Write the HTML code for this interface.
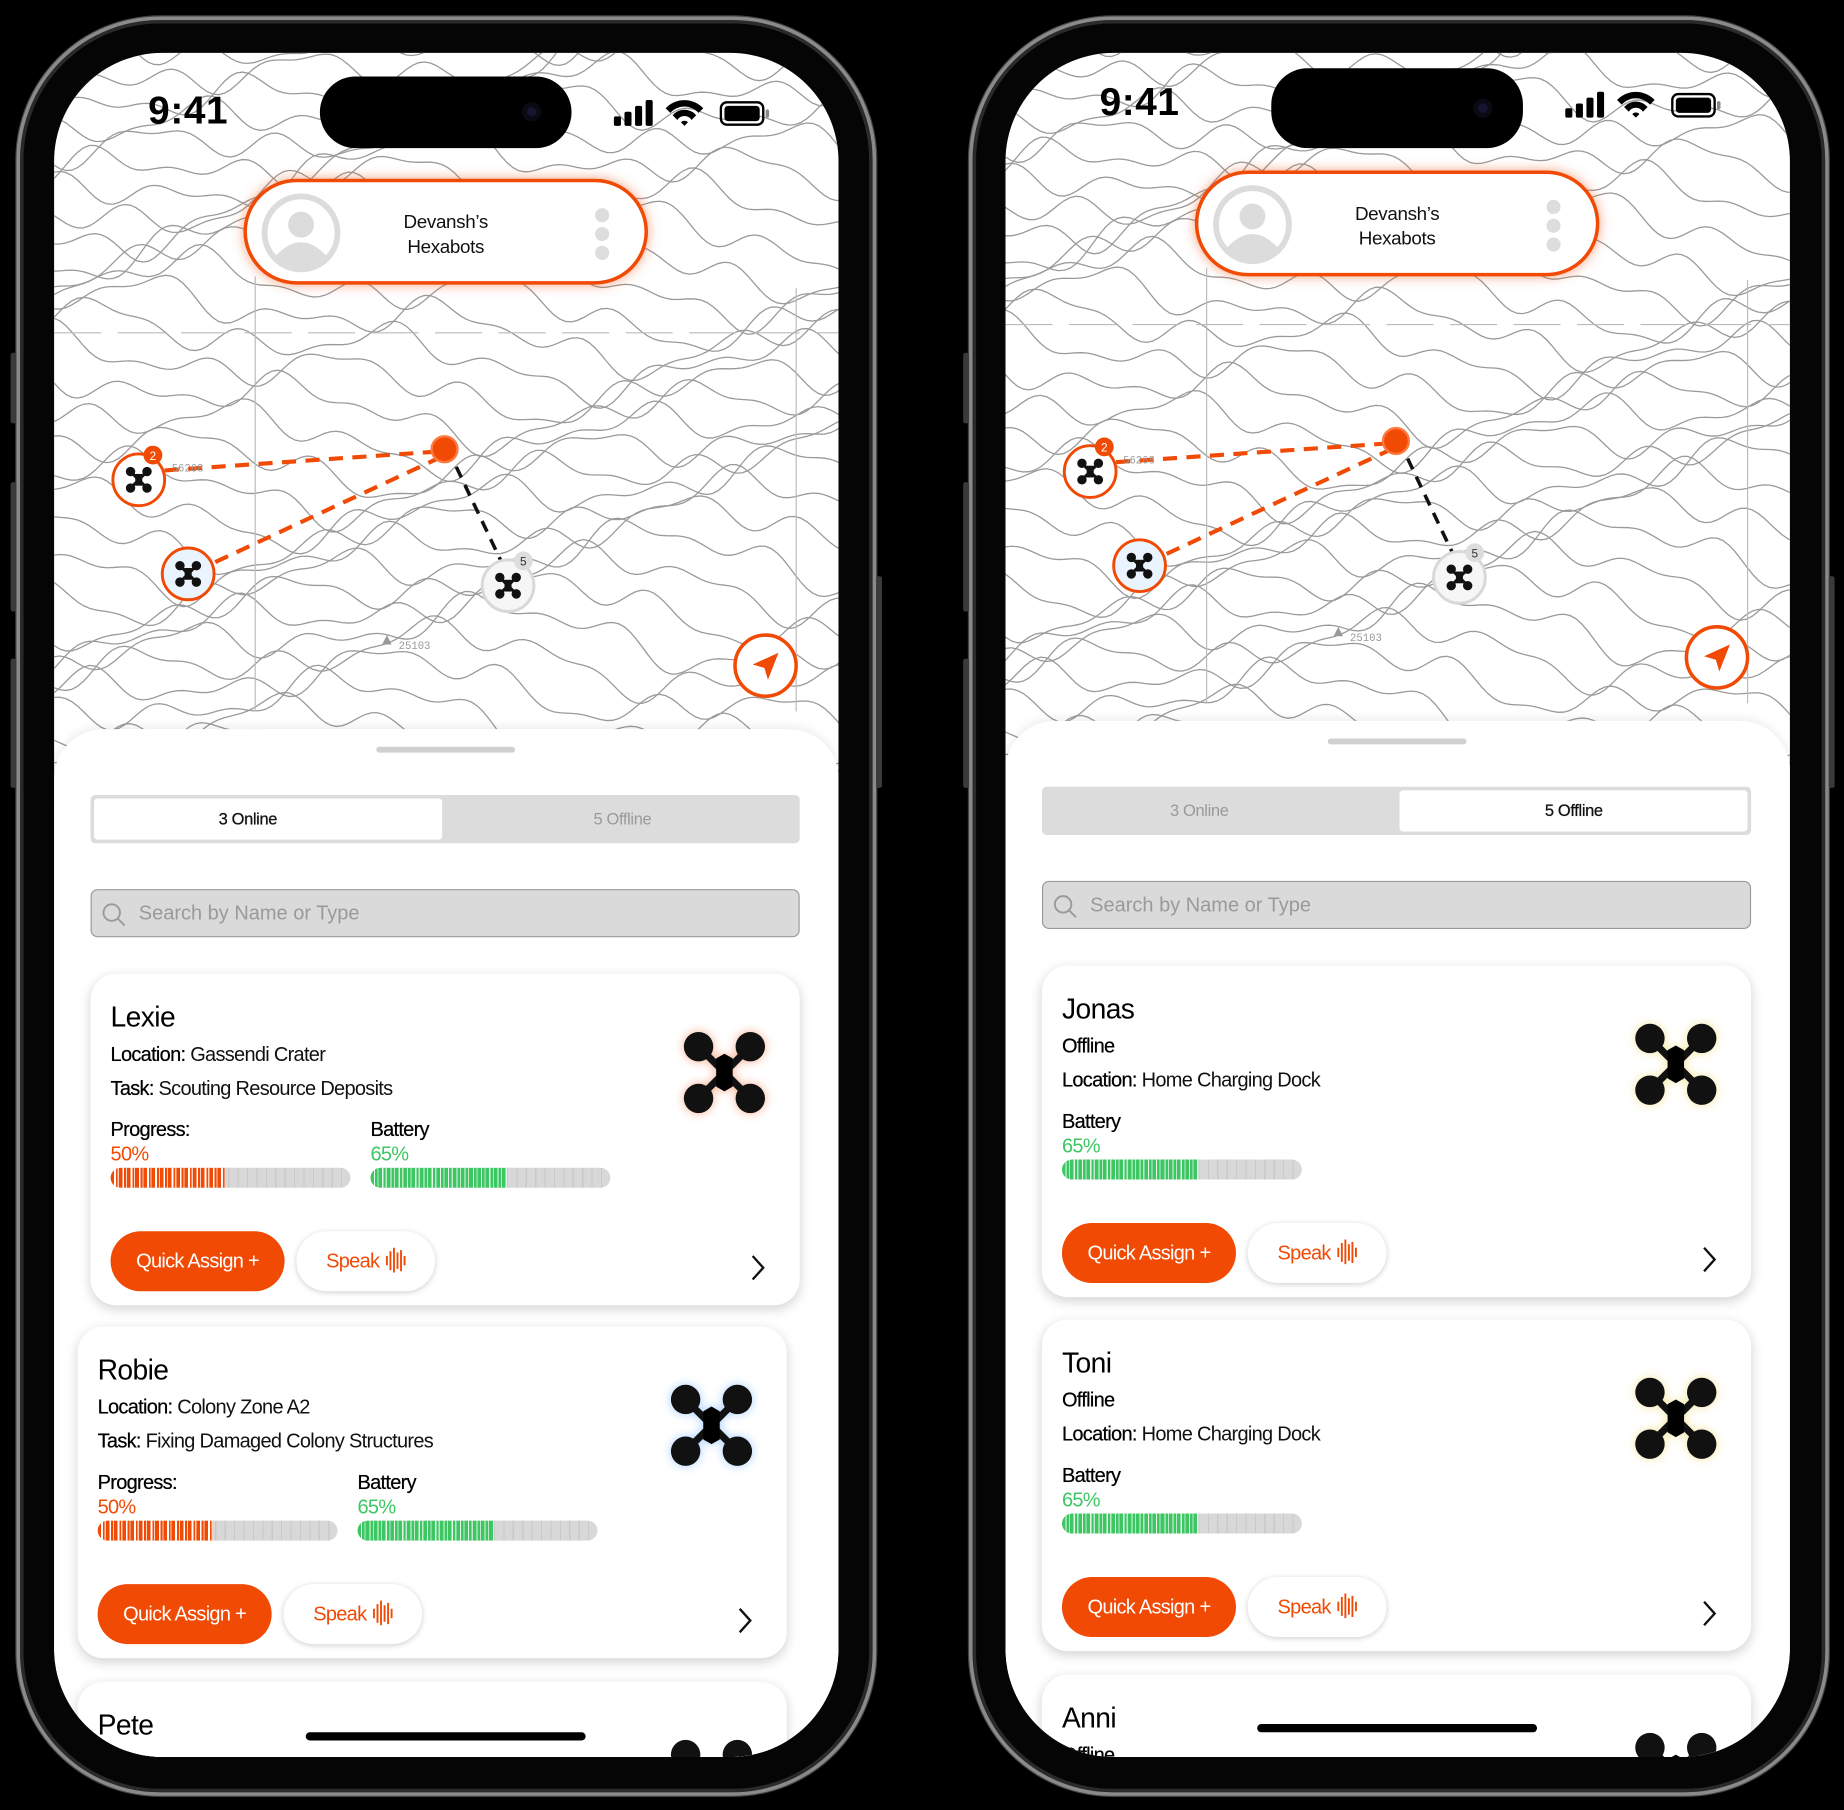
<!DOCTYPE html>
<html><head><meta charset="utf-8">
<style>
*{margin:0;padding:0;box-sizing:border-box}
html,body{width:1844px;height:1810px;background:#000;overflow:hidden;font-family:"Liberation Sans",sans-serif}
#root{position:absolute;left:0;top:0;width:1568px;height:1539px;transform:scale(1.17602);transform-origin:0 0;overflow:hidden}
.frame{position:absolute;top:14px;width:731px;height:1513px;border-radius:122px;background:#050505;border:3px solid #8a8a8a;box-shadow:inset 0 0 0 3px #2a2a2a, 0 0 0 1px #444}
.btn-side{position:absolute;width:5px;background:#3a3a3a;border-radius:2px}
.screen{position:absolute;top:45px;width:667px;height:1449px;border-radius:92px;overflow:hidden;background:#fff}
.inner{position:absolute;left:0;top:0;width:667px;height:1456px;overflow:hidden}
.ab{position:absolute}
.time{left:80px;top:30px;font-size:33px;font-weight:bold;letter-spacing:.5px;color:#000}
.island{left:226px;top:20px;width:214px;height:61px;background:#000;border-radius:31px}
.pill{left:161px;top:107px;width:344px;height:90px;border:3px solid #f04a05;border-radius:46px;background:#fff;box-shadow:0 0 10px rgba(240,74,5,.5)}
.pilltxt{left:0;width:100%;top:24px;text-align:center;font-size:16px;line-height:21px;color:#111;letter-spacing:-.3px}
.sheet{left:0;top:575px;width:667px;height:880px;background:#fff;border-radius:42px 42px 0 0;box-shadow:0 -2px 8px rgba(0,0,0,.08)}
.handle{left:274px;top:15px;width:118px;height:5px;border-radius:3px;background:#d0d0d0}
.seg{left:31px;top:56px;width:603px;height:41px;background:#dcdcdc;border-radius:4px}
.segsel{top:3px;width:296px;height:35px;background:#fff;border-radius:3px}
.segt{top:0;width:50%;line-height:41px;text-align:center;font-size:14px;letter-spacing:-.3px}
.search{left:31px;top:136px;width:603px;height:41px;background:#dadada;border:1.5px solid #9a9a9a;border-radius:6px}
.search span{position:absolute;left:40px;top:0;line-height:39px;font-size:17px;color:#9a9a9a}
.card{position:absolute;width:603px;height:282px;background:#fff;border-radius:22px;box-shadow:0 3px 10px rgba(0,0,0,.18)}
.card .t{position:absolute;left:17px;font-size:17px;line-height:20px;color:#111;letter-spacing:-.6px;white-space:nowrap}
.card .t b{font-weight:normal;color:#000;text-shadow:0 0 .4px #000}
.card .name{position:absolute;left:17px;top:24px;font-size:24px;line-height:28px;color:#000;letter-spacing:-.5px}
.bar{position:absolute;top:165px;width:204px;height:17px;border-radius:9px;overflow:hidden;background:repeating-linear-gradient(90deg,#d8d8d8 0 4px,#c9c9c9 4px 5px,#d8d8d8 5px 8px)}
.bar i{position:absolute;left:0;top:0;height:100%;border-radius:9px 0 0 9px}
.fo{background:repeating-linear-gradient(90deg,#f04a05 0 3px,#fff 3px 4.5px,#f04a05 4.5px 6px,#fbd0bd 6px 7px)}
.fg{background:repeating-linear-gradient(90deg,#3cc763 0 3px,#e6f7ea 3px 4px,#3cc763 4px 6px,#bde9c8 6px 7px)}
.qa{position:absolute;left:17px;top:219px;width:148px;height:51px;border-radius:26px;background:#f04a05;color:#fff;font-size:17px;line-height:51px;text-align:center;letter-spacing:-.6px}
.sp{position:absolute;left:175px;top:219px;width:118px;height:51px;border-radius:26px;background:#fff;box-shadow:0 1px 5px rgba(0,0,0,.2);color:#f04a05;font-size:17px;line-height:51px;text-align:center;letter-spacing:-.6px}
.chev{position:absolute;left:560px;top:238px}
.drone{position:absolute;left:503px;top:48px}
.card .t.orn{color:#f04a05}.card .t.grn{color:#3cc763}
</style></head><body>
<div id="root">

<!-- LEFT PHONE -->
<div class="frame" style="left:14px"></div>
<div class="btn-side" style="left:9px;top:300px;height:60px"></div>
<div class="btn-side" style="left:9px;top:410px;height:110px"></div>
<div class="btn-side" style="left:9px;top:560px;height:110px"></div>
<div class="btn-side" style="left:745px;top:490px;height:180px"></div>
<div class="screen" style="left:46px">
 <div class="inner" id="L">
  <svg class="ab map" style="left:0;top:0" width="667" height="640"></svg>
  <div class="ab time">9:41</div>
  <div class="ab island"><div class="ab" style="left:172px;top:22px;width:16px;height:16px;border-radius:50%;background:#151530;box-shadow:inset 0 0 0 4px #0a0a14"></div></div>
  <svg class="ab" style="left:474px;top:38px" width="140" height="26"><rect x="2" y="16" width="6" height="8" rx="1.5"/><rect x="11" y="12" width="6" height="12" rx="1.5"/><rect x="20" y="7" width="6" height="17" rx="1.5"/><rect x="29" y="2" width="6" height="22" rx="1.5"/><path d="M46 9 A22 22 0 0 1 78 9 L74 13 A16 16 0 0 0 50 13Z M52 15 A13 13 0 0 1 72 15 L68 19 A7 7 0 0 0 56 19Z M59 21 L62 24 L65 21 A4 4 0 0 0 59 21Z"/><rect x="93" y="4" width="36" height="19" rx="5" fill="none" stroke="#000" stroke-width="2"/><rect x="96" y="7" width="30" height="13" rx="3"/><rect x="131" y="10" width="3" height="7" rx="1.5" fill="#888"/></svg>
  <div class="ab pill"><svg class="ab" style="left:12px;top:9px" width="68" height="68"><circle cx="34" cy="34" r="31" fill="#fff" stroke="#dcdcdc" stroke-width="5"/><circle cx="34" cy="27" r="11" fill="#dcdcdc"/><path d="M12 54 Q34 30 56 54 A31 31 0 0 1 12 54Z" fill="#dcdcdc"/></svg><div class="ab pilltxt">Devansh’s<br>Hexabots</div><svg class="ab" style="left:295px;top:20px" width="14" height="50"><circle cx="7" cy="8" r="6" fill="#ddd"/><circle cx="7" cy="24" r="6" fill="#ddd"/><circle cx="7" cy="40" r="6" fill="#ddd"/></svg></div>
  <svg class="ab marks" style="left:0;top:0" width="667" height="575"></svg>
  <div class="ab sheet">
   <div class="ab handle"></div>
   <div class="ab seg"><div class="ab segsel" style="left:3px"></div><div class="ab segt" style="left:-17px;color:#111;text-shadow:0 0 .5px #111">3 Online</div><div class="ab segt" style="left:50%;color:#9a9a9a">5 Offline</div></div>
   <div class="ab search"><svg class="ab" style="left:8px;top:10px" width="22" height="22"><circle cx="9" cy="9" r="7" fill="none" stroke="#9a9a9a" stroke-width="1.6"/><path d="M14 14 L20 20" stroke="#9a9a9a" stroke-width="1.6"/></svg><span>Search by Name or Type</span></div>
  </div>
  <div class="card" style="left:31px;top:783px">
   <div class="name">Lexie</div>
   <div class="t" style="top:59px"><b>Location:</b> Gassendi Crater</div>
   <div class="t" style="top:88px"><b>Task:</b> Scouting Resource Deposits</div>
   <div class="t" style="top:123px"><b>Progress:</b></div><div class="t orn" style="top:144px">50%</div>
   <div class="t" style="top:123px;left:238px"><b>Battery</b></div><div class="t grn" style="top:144px;left:238px">65%</div>
   <div class="bar" style="left:17px"><i class="fo" style="width:48%"></i></div>
   <div class="bar" style="left:238px"><i class="fg" style="width:57%"></i></div>
   <svg class="drone" width="72" height="72" style="filter:drop-shadow(0 0 4px rgba(240,74,5,.45))"><use href="#dr"/></svg>
   <div class="qa">Quick Assign +</div><div class="sp">Speak <svg width="18" height="22" style="vertical-align:-4px"><use href="#wv"/></svg></div>
   <svg class="chev" width="16" height="24"><path d="M3 2 L12 12 L3 22" fill="none" stroke="#111" stroke-width="2"/></svg>
  </div>
  <div class="card" style="left:20px;top:1083px">
   <div class="name">Robie</div>
   <div class="t" style="top:59px"><b>Location:</b> Colony Zone A2</div>
   <div class="t" style="top:88px"><b>Task:</b> Fixing Damaged Colony Structures</div>
   <div class="t" style="top:123px"><b>Progress:</b></div><div class="t orn" style="top:144px">50%</div>
   <div class="t" style="top:123px;left:238px"><b>Battery</b></div><div class="t grn" style="top:144px;left:238px">65%</div>
   <div class="bar" style="left:17px"><i class="fo" style="width:48%"></i></div>
   <div class="bar" style="left:238px"><i class="fg" style="width:57%"></i></div>
   <svg class="drone" width="72" height="72" style="filter:drop-shadow(0 0 4px rgba(80,160,255,.5))"><use href="#dr"/></svg>
   <div class="qa">Quick Assign +</div><div class="sp">Speak <svg width="18" height="22" style="vertical-align:-4px"><use href="#wv"/></svg></div>
   <svg class="chev" width="16" height="24"><path d="M3 2 L12 12 L3 22" fill="none" stroke="#111" stroke-width="2"/></svg>
  </div>
  <div class="card" style="left:20px;top:1385px;height:100px">
   <div class="name">Pete</div>
   <svg class="drone" width="72" height="72"><use href="#dr"/></svg>
  </div>
  <div class="ab" style="left:214px;top:1428px;width:238px;height:7px;border-radius:4px;background:#000"></div>
 </div>
</div>

<!-- RIGHT PHONE -->
<div class="frame" style="left:824px"></div>
<div class="btn-side" style="left:819px;top:300px;height:60px"></div>
<div class="btn-side" style="left:819px;top:410px;height:110px"></div>
<div class="btn-side" style="left:819px;top:560px;height:110px"></div>
<div class="btn-side" style="left:1555px;top:490px;height:180px"></div>
<div class="screen" style="left:855px">
 <div class="inner" id="R" style="top:-7px">
  <svg class="ab map" style="left:0;top:0" width="667" height="640"></svg>
  <div class="ab time">9:41</div>
  <div class="ab island" style="top:20px;height:68px"><div class="ab" style="left:172px;top:26px;width:16px;height:16px;border-radius:50%;background:#151530;box-shadow:inset 0 0 0 4px #0a0a14"></div></div>
  <svg class="ab" style="left:474px;top:38px" width="140" height="26"><rect x="2" y="16" width="6" height="8" rx="1.5"/><rect x="11" y="12" width="6" height="12" rx="1.5"/><rect x="20" y="7" width="6" height="17" rx="1.5"/><rect x="29" y="2" width="6" height="22" rx="1.5"/><path d="M46 9 A22 22 0 0 1 78 9 L74 13 A16 16 0 0 0 50 13Z M52 15 A13 13 0 0 1 72 15 L68 19 A7 7 0 0 0 56 19Z M59 21 L62 24 L65 21 A4 4 0 0 0 59 21Z"/><rect x="93" y="4" width="36" height="19" rx="5" fill="none" stroke="#000" stroke-width="2"/><rect x="96" y="7" width="30" height="13" rx="3"/><rect x="131" y="10" width="3" height="7" rx="1.5" fill="#888"/></svg>
  <div class="ab pill"><svg class="ab" style="left:12px;top:9px" width="68" height="68"><circle cx="34" cy="34" r="31" fill="#fff" stroke="#dcdcdc" stroke-width="5"/><circle cx="34" cy="27" r="11" fill="#dcdcdc"/><path d="M12 54 Q34 30 56 54 A31 31 0 0 1 12 54Z" fill="#dcdcdc"/></svg><div class="ab pilltxt">Devansh’s<br>Hexabots</div><svg class="ab" style="left:295px;top:20px" width="14" height="50"><circle cx="7" cy="8" r="6" fill="#ddd"/><circle cx="7" cy="24" r="6" fill="#ddd"/><circle cx="7" cy="40" r="6" fill="#ddd"/></svg></div>
  <svg class="ab marks" style="left:0;top:0" width="667" height="575"></svg>
  <div class="ab sheet">
   <div class="ab handle"></div>
   <div class="ab seg"><div class="ab segsel" style="left:304px"></div><div class="ab segt" style="left:-17px;color:#9a9a9a">3 Online</div><div class="ab segt" style="left:50%;color:#111;text-shadow:0 0 .5px #111">5 Offline</div></div>
   <div class="ab search"><svg class="ab" style="left:8px;top:10px" width="22" height="22"><circle cx="9" cy="9" r="7" fill="none" stroke="#9a9a9a" stroke-width="1.6"/><path d="M14 14 L20 20" stroke="#9a9a9a" stroke-width="1.6"/></svg><span>Search by Name or Type</span></div>
  </div>
  <div class="card" style="left:31px;top:783px">
   <div class="name">Jonas</div>
   <div class="t" style="top:59px"><b>Offline</b></div>
   <div class="t" style="top:88px"><b>Location:</b> Home Charging Dock</div>
   <div class="t" style="top:123px"><b>Battery</b></div><div class="t grn" style="top:144px">65%</div>
   <div class="bar" style="left:17px"><i class="fg" style="width:57%"></i></div>
   <svg class="drone" width="72" height="72" style="filter:drop-shadow(0 0 4px rgba(240,220,120,.7))"><use href="#dr"/></svg>
   <div class="qa">Quick Assign +</div><div class="sp">Speak <svg width="18" height="22" style="vertical-align:-4px"><use href="#wv"/></svg></div>
   <svg class="chev" width="16" height="24"><path d="M3 2 L12 12 L3 22" fill="none" stroke="#111" stroke-width="2"/></svg>
  </div>
  <div class="card" style="left:31px;top:1084px">
   <div class="name">Toni</div>
   <div class="t" style="top:59px"><b>Offline</b></div>
   <div class="t" style="top:88px"><b>Location:</b> Home Charging Dock</div>
   <div class="t" style="top:123px"><b>Battery</b></div><div class="t grn" style="top:144px">65%</div>
   <div class="bar" style="left:17px"><i class="fg" style="width:57%"></i></div>
   <svg class="drone" width="72" height="72" style="filter:drop-shadow(0 0 4px rgba(240,220,120,.7))"><use href="#dr"/></svg>
   <div class="qa">Quick Assign +</div><div class="sp">Speak <svg width="18" height="22" style="vertical-align:-4px"><use href="#wv"/></svg></div>
   <svg class="chev" width="16" height="24"><path d="M3 2 L12 12 L3 22" fill="none" stroke="#111" stroke-width="2"/></svg>
  </div>
  <div class="card" style="left:31px;top:1386px;height:100px">
   <div class="name">Anni</div>
   <div class="t" style="top:59px"><b>Offline</b></div>
   <svg class="drone" width="72" height="72"><use href="#dr"/></svg>
  </div>
  <div class="ab" style="left:214px;top:1428px;width:238px;height:7px;border-radius:4px;background:#000"></div>
 </div>
</div>

<svg width="0" height="0" style="position:absolute">
 <defs>
  <g id="dr">
   <path d="M16 16 L56 56 M56 16 L16 56" stroke="#111" stroke-width="6"/>
   <circle cx="14" cy="14" r="12.5" fill="#111"/><circle cx="58" cy="14" r="12.5" fill="#111"/>
   <circle cx="14" cy="58" r="12.5" fill="#111"/><circle cx="58" cy="58" r="12.5" fill="#111"/>
   <path d="M29 24 L36 20 L43 24 L43 48 L36 52 L29 48Z" fill="#000"/>
  </g>
  <g id="wv" stroke="#f04a05" stroke-width="1.6">
   <path d="M2 8 V16 M5 4 V20 M8 1 V22 M11 5 V19 M14 3 V21 M17 8 V16"/>
  </g>
  <g id="md">
   <path d="M-7 -7 L7 7 M7 -7 L-7 7" stroke="#111" stroke-width="2.5"/>
   <circle cx="-7" cy="-7" r="4" fill="#111"/><circle cx="7" cy="-7" r="4" fill="#111"/>
   <circle cx="-7" cy="7" r="4" fill="#111"/><circle cx="7" cy="7" r="4" fill="#111"/>
   <rect x="-3" y="-5" width="6" height="10" fill="#111"/>
  </g>
 </defs>
</svg>

<script>
(function(){
 var NS="http://www.w3.org/2000/svg";
 function mk(t,a){var e=document.createElementNS(NS,t);for(var k in a)e.setAttribute(k,a[k]);return e;}
 document.querySelectorAll('.map').forEach(function(svg){
  for(var k=-2;k<32;k++){
   var d="";
   for(var x=-10;x<=680;x+=5){
    var y=k*21+14*Math.sin(x/47+k*0.9)+9*Math.sin(x/19+k*2.3)+22*Math.sin(x/130+k*0.35)+6*Math.cos(x/11+k*1.7);
    d+=(x==-10?"M":"L")+x+","+y.toFixed(1)+" ";
   }
   svg.appendChild(mk("path",{d:d,fill:"none",stroke:"#9a9a9a","stroke-width":"1.1"}));
  }
  svg.appendChild(mk("path",{d:"M171 190 V560",stroke:"#bbb","stroke-width":"1"}));
  svg.appendChild(mk("path",{d:"M0 238 H667",stroke:"#bbb","stroke-width":"1","stroke-dasharray":"40 14"}));
  svg.appendChild(mk("path",{d:"M631 200 V560",stroke:"#bbb","stroke-width":"1"}));
 });
 document.querySelectorAll('.marks').forEach(function(s){
  s.appendChild(mk("path",{d:"M94 355 L326 339",stroke:"#f04a05","stroke-width":"3.5","stroke-dasharray":"12 8",fill:"none"}));
  s.appendChild(mk("path",{d:"M137 433 L240 385 L326 345",stroke:"#f04a05","stroke-width":"3.5","stroke-dasharray":"12 8",fill:"none"}));
  s.appendChild(mk("path",{d:"M342 352 L380 432",stroke:"#111","stroke-width":"3","stroke-dasharray":"10 7",fill:"none"}));
  s.appendChild(mk("circle",{cx:332,cy:337,r:11,fill:"#f04a05",stroke:"#ff7a40","stroke-width":"2"}));
  [[72,363,"#f04a05","#fff"],[114,443,"#f04a05","#eaf4ff"],[386,453,"#d8d8d8","#f6f6f6"]].forEach(function(m){
   s.appendChild(mk("circle",{cx:m[0],cy:m[1],r:22,fill:m[3],stroke:m[2],"stroke-width":"2.5"}));
   s.appendChild(mk("use",{href:"#md",transform:"translate("+m[0]+","+m[1]+")"}));
  });
  s.appendChild(mk("circle",{cx:84,cy:342,r:8,fill:"#f04a05"}));
  var t=mk("text",{x:84,y:346,"font-size":"10","text-anchor":"middle",fill:"#fff","font-family":"Liberation Sans"});t.textContent="2";s.appendChild(t);
  s.appendChild(mk("circle",{cx:399,cy:432,r:8,fill:"#ddd"}));
  t=mk("text",{x:399,y:436,"font-size":"10","text-anchor":"middle",fill:"#333","font-family":"Liberation Sans"});t.textContent="5";s.appendChild(t);
  t=mk("text",{x:100,y:356,"font-size":"9",fill:"#999","font-family":"Liberation Mono"});t.textContent="56268";s.appendChild(t);
  t=mk("text",{x:293,y:507,"font-size":"9",fill:"#999","font-family":"Liberation Mono"});t.textContent="25103";s.appendChild(t);
  s.appendChild(mk("path",{d:"M279 503 L283 495 L287 503Z",fill:"#999"}));
  s.appendChild(mk("circle",{cx:605,cy:521,r:26,fill:"#fff",stroke:"#f04a05","stroke-width":"3"}));
  s.appendChild(mk("path",{d:"M616 510 L594 520 L604 523 L607 533Z",fill:"#f04a05"}));
 });
})();
</script>
</div>
</body></html>
